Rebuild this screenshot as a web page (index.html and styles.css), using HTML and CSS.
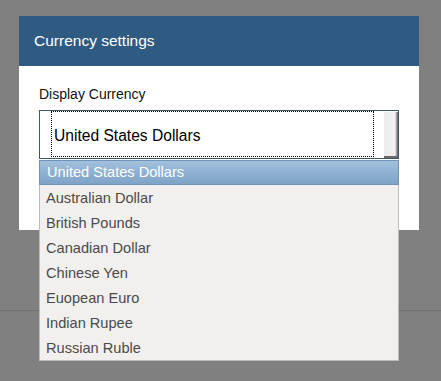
FILE: index.html
```html
<!DOCTYPE html>
<html>
<head>
<meta charset="utf-8">
<link rel="stylesheet" href="styles.css">
</head>
<body>
<div class="page">
  <div class="dialog">
    <div class="dialog-header">Currency settings</div>
    <div class="dialog-body">
      <div class="field-label">Display Currency</div>
      <div class="select">
        <div class="select-value"><span class="focus-ring">United States Dollars</span></div>
        <div class="select-button"></div>
      </div>
    </div>
  </div>
  <div class="backdrop-footer"></div>
  <ul class="dropdown">
    <li class="option selected">United States Dollars</li>
    <li class="option">Australian Dollar</li>
    <li class="option">British Pounds</li>
    <li class="option">Canadian Dollar</li>
    <li class="option">Chinese Yen</li>
    <li class="option">Euopean Euro</li>
    <li class="option">Indian Rupee</li>
    <li class="option">Russian Ruble</li>
  </ul>
</div>
</body>
</html>
```
FILE: styles.css
```css
html, body {
  margin: 0;
  padding: 0;
  background: #808080;
  font-family: "Liberation Sans", Arial, sans-serif;
}

.page {
  position: relative;
  width: 441px;
  height: 381px;
  padding-top: 16px;
  box-sizing: border-box;
  overflow: hidden;
}

.dialog {
  margin-left: 19px;
  width: 400px;
  height: 214px;
  background: #ffffff;
}

.dialog-header {
  height: 50px;
  background: #2f5b83;
  color: #ffffff;
  font-size: 15.5px;
  line-height: 50px;
  padding-left: 15px;
}

.dialog-body {
  padding: 18px 20px 0 20px;
}

.field-label {
  font-size: 14px;
  line-height: 20px;
  color: #111111;
}

.select {
  margin-top: 6px;
  height: 49px;
  border: 1px solid #3b5670;
  box-sizing: border-box;
  display: flex;
  background: #ffffff;
}

.select-value {
  flex: 1;
  padding-left: 11px;
  padding-right: 10px;
  display: flex;
}

.focus-ring {
  flex: 1;
  border: 1px dotted #000;
  margin: 0 0 1px 0;
  padding-left: 2px;
  padding-top: 2px;
  font-size: 15.6px;
  line-height: 43px;
  color: #000000;
}

.select-button {
  width: 14px;
  margin-top: 1px;
  background: linear-gradient(to right, #ececec 0%, #f0f0f0 80%, #9a9a9a 90%, #5e5e5e 100%);
  border-bottom: 2px solid #6a6a6a;
  box-sizing: border-box;
}

.backdrop-footer {
  margin-top: 80px;
  height: 1px;
  background: #707070;
}

.dropdown {
  position: absolute;
  left: 39px;
  top: 160px;
  width: 360px;
  margin: 0;
  padding: 0;
  list-style: none;
  background: #f1f0ee;
  border: 1px solid #bdbbb8;
  border-top: none;
  box-sizing: border-box;
}

.option {
  height: 25px;
  box-sizing: border-box;
  padding-top: 1px;
  line-height: 24px;
  padding-left: 6px;
  font-size: 14.6px;
  color: #4a4a4a;
}

.option.selected {
  height: 25px;
  margin: 0 -1px;
  padding-left: 7px;
  padding-top: 0;
  color: #ffffff;
  background: linear-gradient(to bottom, #a3c1dc 0%, #8eb0d1 50%, #7fa3c7 100%);
  border: 1px solid #6f93b8;
  line-height: 23px;
}
```
